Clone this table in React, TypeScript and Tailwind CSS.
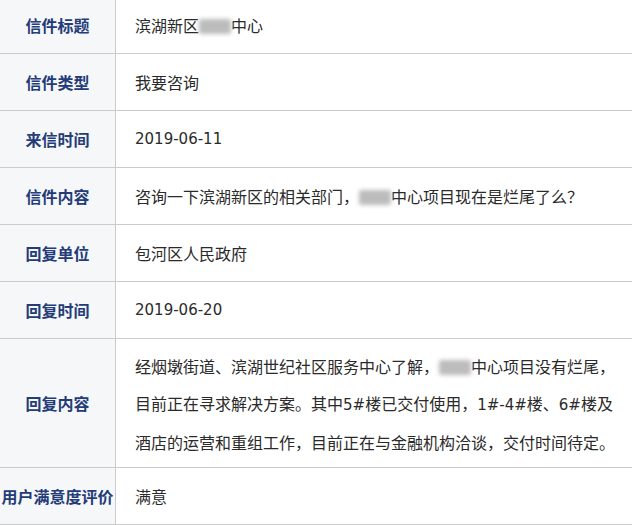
import React from "react";

const Blur = () => (
  <span className="inline-block w-[32px] h-[15px] align-[-2px] bg-[#bcbcbc] blur-[2px] rounded-[2px]" />
);

const L = ({ children }: { children: React.ReactNode }) => (
  <span className="font-['DejaVu_Sans'] text-[15px]">{children}</span>
);

type Row = { label: string; content: React.ReactNode; h: string; first?: boolean };

const rows: Row[] = [
  { label: "信件标题", content: <span>滨湖新区<Blur />中心</span>, h: "h-[54px]", first: true },
  { label: "信件类型", content: <span>我要咨询</span>, h: "h-[57px]" },
  { label: "来信时间", content: <L>2019-06-11</L>, h: "h-[57px]" },
  {
    label: "信件内容",
    content: <span>咨询一下滨湖新区的相关部门，<Blur />中心项目现在是烂尾了么？</span>,
    h: "h-[57px]",
  },
  { label: "回复单位", content: <span>包河区人民政府</span>, h: "h-[57px]" },
  { label: "回复时间", content: <L>2019-06-20</L>, h: "h-[57px]" },
  {
    label: "回复内容",
    content: (
      <div className="leading-[37px] pt-[2px]">
        <div className="whitespace-nowrap">经烟墩街道、滨湖世纪社区服务中心了解，<Blur />中心项目没有烂尾，</div>
        <div className="whitespace-nowrap">
          目前正在寻求解决方案。其中<L>5#</L>楼已交付使用，<L>1#-4#</L>楼、<L>6#</L>楼及
        </div>
        <div className="whitespace-nowrap">酒店的运营和重组工作，目前正在与金融机构洽谈，交付时间待定。</div>
      </div>
    ),
    h: "h-[129px]",
  },
  { label: "用户满意度评价", content: <span>满意</span>, h: "h-[57px]" },
];

export default function App() {
  return (
    <div
      className="w-[632px] h-[525px] bg-white overflow-hidden"
      style={{ fontFamily: '"Noto Sans CJK SC", "Noto Sans", sans-serif' }}
    >
      {rows.map((r) => (
        <div key={r.label} className={`flex border-b border-[#cbcbcb] ${r.h}`}>
          <div
            className={`w-[116px] shrink-0 bg-[#f6f7f9] border-r border-[#cbcbcb] flex items-center justify-center font-bold text-[16px] text-[#243c78] whitespace-nowrap ${r.first ? "pb-[3px]" : ""}`}
          >
            {r.label}
          </div>
          <div
            className={`flex-1 flex items-center pl-[19px] text-[16px] text-[#2a2a2a] ${r.first ? "pb-[3px]" : ""}`}
          >
            {r.content}
          </div>
        </div>
      ))}
    </div>
  );
}
